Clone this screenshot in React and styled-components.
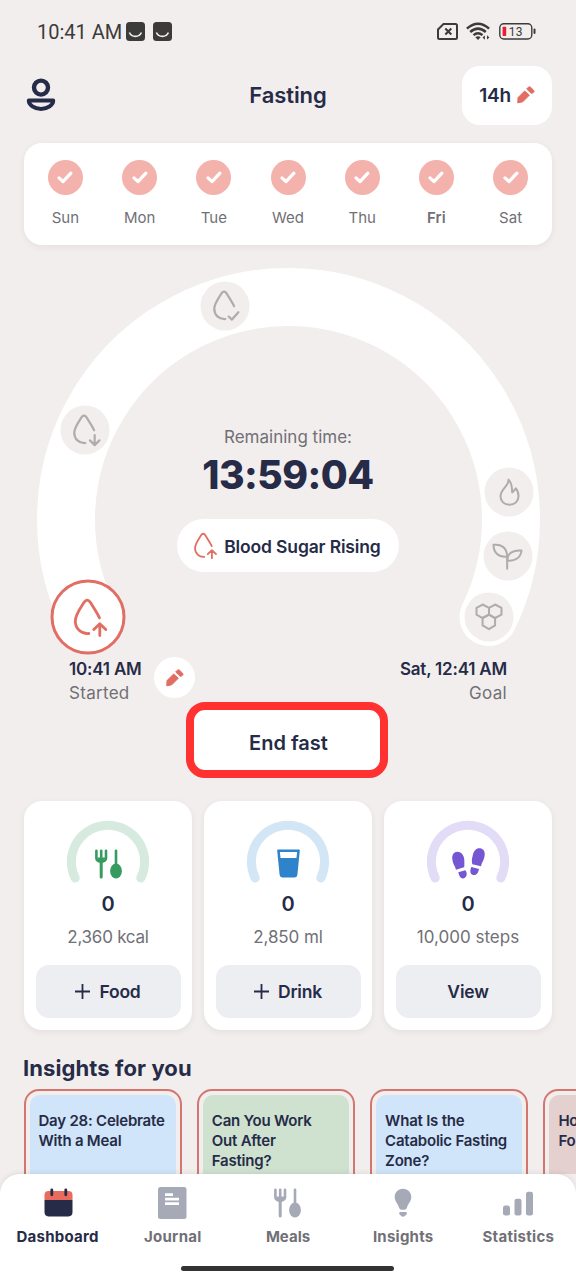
import React from 'react';
import styled, { createGlobalStyle } from 'styled-components';

const NAVY = '#262b47';
const GREY = '#707076';
const CORAL = '#e26d62';
const BACKGROUND = '#f2eeed';

const GlobalStyle = createGlobalStyle`
    * {
        box-sizing: border-box;
    }

    body {
        margin: 0;
        background: ${BACKGROUND};
        color: ${NAVY};
        font-family: Inter, 'Liberation Sans', sans-serif;
    }

    button {
        border: 0;
        padding: 0;
        color: inherit;
        font-family: inherit;
    }

    svg {
        display: block;
        flex-shrink: 0;
        overflow: visible;
    }
`;

const Screen = styled.div`
    display: flex;
    flex-direction: column;
    width: 576px;
    height: 1280px;
    overflow: hidden;
    background: ${BACKGROUND};
`;

const Content = styled.main`
    flex: 1;
    min-height: 0;
    overflow: hidden;
`;

const StatusBar = styled.div`
    display: flex;
    align-items: center;
    justify-content: space-between;
    height: 63px;
    padding: 0 40px 0 37px;
    color: #3c3b3a;
`;

const StatusGroup = styled.div`
    display: flex;
    align-items: center;
    gap: ${({ $gap }) => $gap}px;
`;

const Clock = styled.span`
    margin-right: -4px;
    font-family: Roboto, sans-serif;
    font-size: 20px;
    white-space: nowrap;
`;

const Header = styled.header`
    display: grid;
    grid-template-columns: 1fr auto 1fr;
    align-items: center;
    height: 60px;
    margin-top: 2px;
    padding: 0 24px;
`;

const PageTitle = styled.h1`
    margin: 0;
    font-size: 22px;
    font-weight: 600;
    letter-spacing: -0.1px;
`;

const PlanButton = styled.button`
    display: flex;
    align-items: center;
    justify-content: center;
    justify-self: end;
    gap: 6px;
    width: 90px;
    height: 59px;
    border-radius: 18px;
    background: #fff;
    font-size: 19px;
    font-weight: 600;
    letter-spacing: -0.2px;
`;

const WeekCard = styled.section`
    display: grid;
    grid-template-columns: repeat(7, 74.2px);
    justify-content: center;
    height: 102.5px;
    margin: 17.5px 24px 0;
    padding-top: 17.5px;
    border-radius: 18px;
    background: #fff;
    box-shadow: 0 2px 6px rgba(80, 60, 60, 0.07);
`;

const Day = styled.div`
    display: flex;
    flex-direction: column;
    align-items: center;
    gap: 13.5px;
    color: ${GREY};
    font-size: 15px;
    font-weight: ${({ $today }) => ($today ? 600 : 400)};
    line-height: 18px;
`;

const DayCheck = styled.span`
    display: flex;
    align-items: center;
    justify-content: center;
    width: 35px;
    height: 35px;
    border-radius: 50%;
    background: #f3b2ab;
`;

const Dial = styled.section`
    position: relative;
    height: 388px;
    margin-top: 21.5px;
`;

const Ring = styled.svg`
    position: absolute;
    top: 0;
    left: 0;
`;

const Stage = styled.span`
    position: absolute;
    top: ${({ $y }) => $y}px;
    left: ${({ $x }) => $x}px;
    display: flex;
    align-items: center;
    justify-content: center;
    width: ${({ $active }) => ($active ? 75 : 49)}px;
    height: ${({ $active }) => ($active ? 75 : 49)}px;
    border: ${({ $active }) => ($active ? `3px solid ${CORAL}` : 0)};
    border-radius: 50%;
    background: ${({ $active }) => ($active ? '#fff' : BACKGROUND)};
    color: ${({ $active }) => ($active ? CORAL : '#adacaf')};
    transform: translate(-50%, -50%);
`;

const Countdown = styled.div`
    position: relative;
    display: flex;
    flex-direction: column;
    align-items: center;
    padding-top: 159.5px;
`;

const CountdownLabel = styled.div`
    color: ${GREY};
    font-size: 17px;
    letter-spacing: 0;
    line-height: 22px;
`;

const CountdownTime = styled.div`
    margin-top: 5px;
    font-size: 39px;
    font-weight: 800;
    letter-spacing: -0.5px;
    line-height: 44px;
`;

const StagePill = styled.div`
    display: flex;
    align-items: center;
    justify-content: center;
    gap: 8px;
    width: 222px;
    height: 53px;
    margin-top: 22px;
    padding: 1px 4px 0 0;
    border-radius: 27px;
    background: #fff;
    font-size: 17.5px;
    font-weight: 600;
    letter-spacing: -0.15px;
    white-space: nowrap;

    svg {
        color: ${CORAL};
    }
`;

const Times = styled.div`
    display: flex;
    justify-content: space-between;
    height: 46px;
    margin-top: 2.5px;
    padding: 0 69px;
`;

const TimeGroup = styled.div`
    display: flex;
    gap: 12.5px;
`;

const TimeText = styled.div`
    color: ${GREY};
    font-size: 17px;
    letter-spacing: 0.3px;
    line-height: 24px;
    text-align: ${({ $align }) => $align};
    white-space: nowrap;

    strong {
        display: block;
        color: ${NAVY};
        font-weight: 600;
        letter-spacing: -0.2px;
    }
`;

const EditButton = styled.button`
    display: flex;
    align-items: center;
    justify-content: center;
    width: 41px;
    height: 41px;
    border-radius: 50%;
    background: #fff;
`;

const EndFastButton = styled.button`
    display: block;
    width: 202px;
    height: 76px;
    margin: -1.5px 0 0 186px;
    padding: 7px 0 0 3px;
    border: 8px solid #ff3131;
    border-radius: 19px;
    background: #fff;
    font-size: 20px;
    font-weight: 600;
`;

const Trackers = styled.section`
    display: grid;
    grid-template-columns: repeat(3, 1fr);
    gap: 12px;
    margin-top: 23.5px;
    padding: 0 24px;
`;

const TrackerCard = styled.div`
    display: flex;
    flex-direction: column;
    align-items: center;
    height: 229px;
    padding: 19.5px 11px 0;
    border-radius: 18px;
    background: #fff;
    box-shadow: 0 2px 6px rgba(80, 60, 60, 0.08);
`;

const TrackerValue = styled.div`
    margin-top: 10px;
    font-size: 20px;
    font-weight: 600;
    line-height: 24px;
`;

const TrackerGoal = styled.div`
    margin-top: 9.5px;
    color: ${GREY};
    font-size: 17px;
    letter-spacing: ${({ $spacing }) => $spacing}px;
    line-height: 24px;
    white-space: nowrap;
`;

const TrackerButton = styled.button`
    display: flex;
    align-items: center;
    justify-content: center;
    gap: 9px;
    width: 145px;
    height: 53px;
    margin-top: 16px;
    border-radius: 13px;
    background: #edeef2;
    font-size: 17.5px;
    font-weight: 600;
    letter-spacing: -0.2px;
`;

const InsightsTitle = styled.h2`
    margin: 23px 0 0 23px;
    font-size: 22px;
    font-weight: 700;
    letter-spacing: 0.1px;
    line-height: 30px;
`;

const InsightList = styled.div`
    display: flex;
    gap: 15.3px;
    margin-top: 6px;
    padding-left: 23.5px;
`;

const InsightFrame = styled.article`
    flex: 0 0 158px;
    height: 190px;
    padding: 4px;
    border: 2px solid #d2766f;
    border-radius: 15px;
`;

const InsightCard = styled.div`
    height: 100%;
    padding: 16px 0 0 9px;
    border-radius: 10px;
    background: ${({ $color }) => $color};
    font-size: 15px;
    font-weight: 600;
    letter-spacing: -0.22px;
    line-height: 20.2px;
    white-space: pre-line;
`;

const BottomNav = styled.nav`
    position: relative;
    height: 106px;
    border-radius: 20px 20px 0 0;
    background: #fff;
    box-shadow: 0 -1px 5px rgba(60, 50, 50, 0.1);
`;

const Tabs = styled.div`
    display: grid;
    grid-template-columns: repeat(5, 1fr);
    height: 92px;
    padding-top: 12px;
`;

const Tab = styled.a`
    display: flex;
    flex-direction: column;
    align-items: center;
    gap: 7px;
    color: ${({ $active }) => ($active ? NAVY : GREY)};
    font-size: 15px;
    font-weight: 700;
    letter-spacing: ${({ $spacing }) => $spacing}px;
    line-height: 20px;
`;

const TabIcon = styled.span`
    display: flex;
    align-items: center;
    height: 34px;
    color: #a6a9b6;
`;

const HomeBar = styled.div`
    width: 213px;
    height: 5px;
    margin: 0 auto 0 181px;
    border-radius: 3px;
    background: #333;
`;

const GaugeBox = styled.div`
    position: relative;
    height: 61px;
`;

const GaugeIcon = styled.div`
    position: absolute;
    inset: 28px 0 auto;
    display: flex;
    align-items: center;
    justify-content: center;
    height: 30px;
`;

const AppBadgeIcon = () => (
    <svg width="19" height="19" viewBox="0 0 19 19">
        <rect width="19" height="19" rx="3.5" fill="#3c3b3a" />
        <path d="M3.4 10.5c2.2 5.2 9.8 5.2 12 0" fill="none" stroke="#f2eeed" strokeWidth="1.6" />
    </svg>
);

const SimIcon = () => (
    <svg width="21" height="17" viewBox="0 0 21 17" fill="none" stroke="currentColor">
        <path d="M6.5 1H18.5Q20 1 20 2.5V14.5Q20 16 18.5 16H2.5Q1 16 1 14.5V6.5Z" strokeWidth="2" />
        <path d="M8.3 5.5l6 6M14.3 5.5l-6 6" strokeWidth="2.1" />
    </svg>
);

const WifiIcon = () => (
    <svg width="25" height="19" viewBox="0 0 25 19" fill="none" stroke="currentColor">
        <path d="M.9 6.6Q12 -3.2 23.1 6.6" strokeWidth="2.5" />
        <path d="M4.2 10Q12 3.2 19.8 10" strokeWidth="2.5" />
        <path d="M7.5 13.2Q12 9.2 16.5 13.2" strokeWidth="2.4" />
        <path d="M9.4 15.2Q12 13.4 14.6 15.2L12 18Z" fill="currentColor" stroke="none" />
        <path d="M18.9 13.4v4.4l-2.4-2.2zM21 17.6v-4.4l2.4 2.2z" fill="currentColor" stroke="none" />
    </svg>
);

const BatteryIcon = () => (
    <svg width="37" height="17" viewBox="0 0 37 17">
        <rect x=".8" y=".8" width="32" height="15.2" rx="4" fill="none" stroke="currentColor" strokeWidth="1.4" />
        <rect x="3.6" y="3.7" width="3.6" height="9.2" rx=".7" fill="#ec1c33" />
        <rect x="34.5" y="5.6" width="2" height="5.5" rx="1" fill="currentColor" />
        <text x="9.8" y="12.7" fontFamily="Roboto, sans-serif" fontSize="12" letterSpacing=".3" fill="currentColor">
            13
        </text>
    </svg>
);

const ProfileIcon = () => (
    <svg width="34" height="34" viewBox="-2 0 34 34" fill="none" stroke={NAVY}>
        <circle cx="15" cy="9.6" r="7" strokeWidth="4.4" />
        <path
            d="M2.8 22.6H27.2C27.2 27 21.8 30.9 15 30.9S2.8 27 2.8 22.6Z"
            strokeWidth="4"
            strokeLinejoin="round"
        />
    </svg>
);

const PencilIcon = () => (
    <svg width="18" height="17.5" viewBox="0 0 54 53" fill={CORAL} stroke={CORAL} strokeWidth="3" strokeLinejoin="round">
        <path d="M2 51L3 35L23 15L37 28L17 48Z" />
        <path d="M29 9L35 3Q38 1 41 4L50 13Q53 16 50 19L44 23Z" />
    </svg>
);

const CheckIcon = () => (
    <svg width="16" height="13" viewBox="0 0 16 13" fill="none" stroke="#fff" strokeWidth="3.3">
        <path d="M2 6.9L6 10.6L13.9 2.2" strokeLinecap="round" strokeLinejoin="round" />
    </svg>
);

const dropMarks = {
    up: 'M30.3 38V26.5M24.3 32L30.3 26.2L36.3 32',
    down: 'M30.7 26.5V38.3M24.9 32.8L30.7 38.6L36.5 32.8',
    check: 'M23.4 33L27.4 36.7L35.2 27.8',
};

const DropIcon = ({ mark = 'up', scale = 1, weight = 2.8 }) => (
    <svg
        width={36 * scale}
        height={40 * scale}
        viewBox="0 0 36 40"
        fill="none"
        stroke="currentColor"
        strokeWidth={weight}
        strokeLinecap="round"
        strokeLinejoin="round"
    >
        <path d="M30 20.4C27.8 15.6 24.5 10.8 20.8 4.8C18.9 1.8 16.5 1.8 14.6 4.8C10 11.8 5.8 17.5 5.8 23.5C5.8 31 11.4 36.5 19.3 36" />
        <path d={dropMarks[mark]} />
    </svg>
);

const FlameIcon = () => (
    <svg width="20" height="27" viewBox="0 0 60 80" fill="none" stroke="currentColor" strokeWidth="6" strokeLinejoin="round">
        <path d="M27 3C28 22 3 32 3 53C3 68 14 78 30 78S57 68 57 53C57 44 55 36 49 29C45 34 43 38 38 41C38 26 37 12 27 3Z" />
    </svg>
);

const SproutIcon = () => (
    <svg
        width="30"
        height="26"
        viewBox="0 0 90 78"
        fill="none"
        stroke="currentColor"
        strokeWidth="6"
        strokeLinecap="round"
        strokeLinejoin="round"
    >
        <path d="M44 76V38C43 12 25 1 3 4C3 28 18 42 44 39" />
        <path d="M44 51C44 30 61 19 87 21C85 42 68 54 44 51Z" />
    </svg>
);

const HoneycombIcon = () => (
    <svg width="27" height="27" viewBox="0 0 80 80" fill="none" stroke="currentColor" strokeWidth="6" strokeLinejoin="round">
        <path d="M21 3L40 13V33L21 43L3 33V13Z" />
        <path d="M58 3L77 13V33L58 43L40 33V13Z" />
        <path d="M21 43L40 33L58 43V65L40 76L21 65Z" />
    </svg>
);

const CutleryIcon = ({ color = 'currentColor' }) => (
    <svg width="27" height="30" viewBox="0 0 27 30" fill={color} stroke={color} strokeLinecap="round">
        <path d="M1.4 1.8V9.4Q1.6 12.2 6.2 13Q10.8 12.2 11 9.4V1.8M6.2 1.8V12" strokeWidth="2.6" fill="none" />
        <path d="M2 8.5H10.4L8.5 12.8H4Z" stroke="none" />
        <path d="M6.2 12V28" strokeWidth="3" />
        <path d="M21 1.8V16" strokeWidth="2.6" />
        <ellipse cx="21" cy="22" rx="5.9" ry="7.4" stroke="none" />
    </svg>
);

const GlassIcon = () => (
    <svg width="23" height="29" viewBox="0 0 24 29">
        <path
            d="M1 0H23Q24 0 23.8 1L21.3 26.3Q21 29 18.5 29H5.5Q3 29 2.7 26.3L.2 1Q0 0 1 0ZM3 2.6L3.7 8.8H20.3L21 2.6Z"
            fill="#2e83cb"
            fillRule="evenodd"
        />
    </svg>
);

const StepsIcon = () => (
    <svg width="33" height="31" viewBox="0 0 99 93" fill="#7657d3">
        <path d="M1 34C-1 20 6 11 16 11C30 11 38 25 37 40C37 48 38 54 36 58L12 65C10 56 2 48 1 34Z" />
        <path d="M19 73L40 67C46 74 46 87 36 91C26 94 21 84 19 73Z" />
        <path d="M62 23C65 8 73 0 84 1C96 2 101 14 97 28C94 40 90 42 87 55L61 49C59 39 59 35 62 23Z" />
        <path d="M58 57L81 63C79 74 74 83 64 81C54 79 53 69 58 57Z" />
    </svg>
);

const PlusIcon = () => (
    <svg width="15" height="15" viewBox="0 0 15 15" stroke={NAVY} strokeWidth="1.8">
        <path d="M7.5 0V15M0 7.5H15" />
    </svg>
);

const CalendarIcon = () => (
    <svg width="28" height="30" viewBox="0 0 28 30">
        <path d="M.5 12V7Q.5 3 4.5 3H24.5Q28.5 3 28.5 7V12Z" fill="#e96b5d" />
        <path d="M.5 12H28.5V24Q28.5 28.4 24.5 28.4H4.5Q.5 28.4 .5 24Z" fill={NAVY} />
        <path d="M7.8 1.8V6.8M21.8 1.8V6.8" stroke={NAVY} strokeWidth="2.8" strokeLinecap="round" />
    </svg>
);

const JournalIcon = () => (
    <svg width="29" height="32" viewBox="0 0 29 32">
        <rect width="28.5" height="32" rx="2.5" fill="currentColor" />
        <path d="M7 7.7H15M7 12.2H21M7 16.7H21" stroke="#fff" strokeWidth="2.7" />
    </svg>
);

const BulbIcon = () => (
    <svg width="18" height="30" viewBox="0 0 18 30" fill="currentColor">
        <path d="M9 .8C14 .8 17.3 4.6 17.3 9C17.3 13.7 14 15.5 12.8 20Q12.2 21.8 10.7 21.8H7.3Q5.8 21.8 5.2 20C4 15.5.7 13.7.7 9C.7 4.6 4 .8 9 .8Z" />
        <path d="M6.5 24H11.5Q13 24 13 25.2T11 27.8Q9 29.5 7 27.8T5 25.2T6.5 24Z" />
    </svg>
);

const BarsIcon = () => (
    <svg width="30" height="30" viewBox="0 0 30 30" fill="currentColor">
        <rect x="0" y="17.5" width="7" height="10" rx="2.3" />
        <rect x="11.5" y="10.7" width="7" height="16.8" rx="2.3" />
        <rect x="23" y="3.7" width="7" height="23.8" rx="2.3" />
    </svg>
);

const Gauge = ({ color, children }) => (
    <GaugeBox>
        <svg width="84" height="65" viewBox="0 0 84 65" fill="none" stroke={color} strokeWidth="9" strokeLinecap="round">
            <path d="M9.2 57A36.6 36.6 0 1 1 74.8 57" />
        </svg>
        <GaugeIcon>{children}</GaugeIcon>
    </GaugeBox>
);

const days = ['Sun', 'Mon', 'Tue', 'Wed', 'Thu', 'Fri', 'Sat'];

const stages = [
    { x: 224.5, y: 39.5, icon: <DropIcon mark="check" scale={0.82} weight={2.7} /> },
    { x: 84.5, y: 163, icon: <DropIcon mark="down" scale={0.82} weight={2.7} /> },
    { x: 509.3, y: 225, icon: <FlameIcon /> },
    { x: 507.7, y: 289.7, icon: <SproutIcon /> },
    { x: 488.5, y: 350.5, icon: <HoneycombIcon /> },
    { x: 87.5, y: 350.5, icon: <DropIcon />, active: true },
];

const trackers = [
    { goal: '2,360 kcal', action: 'Food', add: true, color: '#d6eadf', icon: <CutleryIcon color="#379b60" />, spacing: -0.25 },
    { goal: '2,850 ml', action: 'Drink', add: true, color: '#d2e6f6', icon: <GlassIcon />, spacing: -0.1 },
    { goal: '10,000 steps', action: 'View', color: '#e2dcf6', icon: <StepsIcon />, spacing: 0 },
];

const insights = [
    { title: 'Day 28: Celebrate\nWith a Meal', color: '#d0e5f9' },
    { title: 'Can You Work\nOut After\nFasting?', color: '#cfe2d0' },
    { title: 'What Is the\nCatabolic Fasting\nZone?', color: '#d0e5f9' },
    { title: 'How to\nFocus', color: '#e4d0cf' },
];

const tabs = [
    { label: 'Dashboard', icon: <CalendarIcon />, active: true, spacing: 0.25 },
    { label: 'Journal', icon: <JournalIcon />, spacing: 0.3 },
    { label: 'Meals', icon: <CutleryIcon />, spacing: 0 },
    { label: 'Insights', icon: <BulbIcon />, spacing: 0.25 },
    { label: 'Statistics', icon: <BarsIcon />, spacing: 0.3 },
];

export default function App() {
    return (
        <>
            <GlobalStyle />
            <Screen>
                <Content>
                    <StatusBar>
                        <StatusGroup $gap={8}>
                            <Clock>10:41 AM</Clock>
                            <AppBadgeIcon />
                            <AppBadgeIcon />
                        </StatusGroup>
                        <StatusGroup $gap={8}>
                            <SimIcon />
                            <WifiIcon />
                            <BatteryIcon />
                        </StatusGroup>
                    </StatusBar>

                    <Header>
                        <ProfileIcon />
                        <PageTitle>Fasting</PageTitle>
                        <PlanButton>
                            14h
                            <PencilIcon />
                        </PlanButton>
                    </Header>

                    <WeekCard>
                        {days.map(day => (
                            <Day key={day} $today={day === 'Fri'}>
                                <DayCheck>
                                    <CheckIcon />
                                </DayCheck>
                                {day}
                            </Day>
                        ))}
                    </WeekCard>

                    <Dial>
                        <Ring width="576" height="388" viewBox="0 0 576 388">
                            <path
                                d="M88.5 350A222.5 222.5 0 1 1 488.5 350"
                                fill="none"
                                stroke="#fff"
                                strokeWidth="58"
                                strokeLinecap="round"
                            />
                        </Ring>
                        {stages.map(({ x, y, icon, active }) => (
                            <Stage key={x} $x={x} $y={y} $active={active}>
                                {icon}
                            </Stage>
                        ))}
                        <Countdown>
                            <CountdownLabel>Remaining time:</CountdownLabel>
                            <CountdownTime>13:59:04</CountdownTime>
                            <StagePill>
                                <DropIcon scale={0.69} weight={2.6} />
                                Blood Sugar Rising
                            </StagePill>
                        </Countdown>
                    </Dial>

                    <Times>
                        <TimeGroup>
                            <TimeText>
                                <strong>10:41 AM</strong>
                                Started
                            </TimeText>
                            <EditButton>
                                <PencilIcon />
                            </EditButton>
                        </TimeGroup>
                        <TimeText $align="right">
                            <strong>Sat, 12:41 AM</strong>
                            Goal
                        </TimeText>
                    </Times>

                    <EndFastButton>End fast</EndFastButton>

                    <Trackers>
                        {trackers.map(({ goal, action, add, color, icon, spacing }) => (
                            <TrackerCard key={action}>
                                <Gauge color={color}>{icon}</Gauge>
                                <TrackerValue>0</TrackerValue>
                                <TrackerGoal $spacing={spacing}>{goal}</TrackerGoal>
                                <TrackerButton>
                                    {add && <PlusIcon />}
                                    {action}
                                </TrackerButton>
                            </TrackerCard>
                        ))}
                    </Trackers>

                    <InsightsTitle>Insights for you</InsightsTitle>
                    <InsightList>
                        {insights.map(({ title, color }) => (
                            <InsightFrame key={title}>
                                <InsightCard $color={color}>{title}</InsightCard>
                            </InsightFrame>
                        ))}
                    </InsightList>
                </Content>

                <BottomNav>
                    <Tabs>
                        {tabs.map(({ label, icon, active, spacing }) => (
                            <Tab key={label} $active={active} $spacing={spacing}>
                                <TabIcon>{icon}</TabIcon>
                                {label}
                            </Tab>
                        ))}
                    </Tabs>
                    <HomeBar />
                </BottomNav>
            </Screen>
        </>
    );
}
